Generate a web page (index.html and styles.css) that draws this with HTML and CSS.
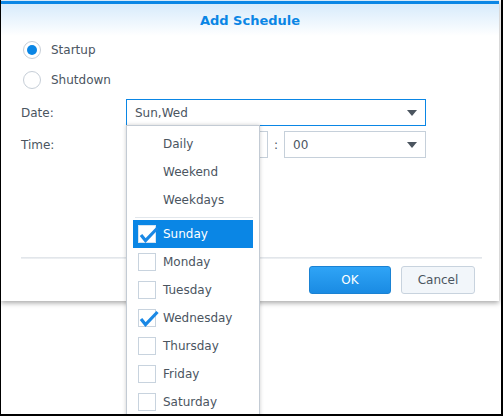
FILE: index.html
```html
<!DOCTYPE html>
<html>
<head>
<meta charset="utf-8">
<link rel="stylesheet" href="styles.css">
</head>
<body>
<div class="frame">
  <div class="dialog">
    <div class="header">Add Schedule</div>
    <div class="content">
      <div class="radio-row"><span class="radio checked"></span><span>Startup</span></div>
      <div class="radio-row"><span class="radio"></span><span>Shutdown</span></div>
      <div class="field-row date-row">
        <span class="label">Date:</span>
        <div class="combo focus wide"><span>Sun,Wed</span><span class="arrow"></span></div>
      </div>
      <div class="field-row">
        <span class="label">Time:</span>
        <div class="combo half"><span></span><span class="arrow"></span></div>
        <span class="colon">:</span>
        <div class="combo half"><span>00</span><span class="arrow"></span></div>
      </div>
    </div>
    <div class="footer">
      <div class="sep"></div>
      <div class="buttons">
        <button class="btn primary">OK</button>
        <button class="btn">Cancel</button>
      </div>
    </div>
  </div>
  <div class="dropdown">
    <div class="item plain">Daily</div>
    <div class="item plain">Weekend</div>
    <div class="item plain">Weekdays</div>
    <div class="divider"></div>
    <div class="item selected"><span class="box"><svg class="check" viewBox="0 0 18 18" width="18" height="18"><polyline points="2,9 6.5,14.5 18.5,2"/></svg></span>Sunday</div>
    <div class="item"><span class="box"></span>Monday</div>
    <div class="item"><span class="box"></span>Tuesday</div>
    <div class="item"><span class="box"><svg class="check" viewBox="0 0 18 18" width="18" height="18"><polyline points="2,9 6.5,14.5 18.5,2"/></svg></span>Wednesday</div>
    <div class="item"><span class="box"></span>Thursday</div>
    <div class="item"><span class="box"></span>Friday</div>
    <div class="item"><span class="box"></span>Saturday</div>
  </div>
</div>
</body>
</html>
```
FILE: styles.css
```css
* { box-sizing: border-box; }
html, body { margin: 0; padding: 0; background: #fff; }
body { font-family: "DejaVu Sans", Verdana, sans-serif; font-size: 12px; color: #4b555f; }

.frame {
  position: relative;
  width: 503px;
  height: 416px;
  border-left: 1px solid #000;
  border-right: 2px solid #000;
  border-bottom: 2px solid #000;
  overflow: hidden;
  background: #fff;
}

.dialog {
  width: 498px;
  height: 301px;
  background: #fff;
  box-shadow: 0 2px 5px rgba(0,0,0,0.35);
  display: flex;
  flex-direction: column;
}

.header {
  height: 36px;
  border-top: 1px solid #d4e7f7;
  box-shadow: inset 0 3px 0 #0a86e5;
  background: linear-gradient(#d3e9fb, #ffffff);
  color: #0a86e5;
  font-weight: bold;
  font-size: 13px;
  text-align: center;
  padding-top: 12px;
}

.content { padding: 0 0 0 20px; }

.radio-row {
  height: 30px;
  display: flex;
  align-items: center;
  padding-left: 2px;
  gap: 10px;
}
.radio-row:first-child { margin-top: -1px; }

.radio {
  width: 18px;
  height: 18px;
  border-radius: 50%;
  border: 1px solid #c6ced7;
  background: #fff;
  display: flex;
  align-items: center;
  justify-content: center;
}
.radio.checked::after {
  content: "";
  width: 10px;
  height: 10px;
  border-radius: 50%;
  background: #0a86e5;
}

.field-row {
  display: flex;
  align-items: center;
  height: 27px;
  margin-top: 5px;
}
.date-row { margin-top: 4px; }

.label { width: 105px; }

.combo {
  height: 27px;
  border: 1px solid #c6d0da;
  display: flex;
  align-items: center;
  justify-content: space-between;
  padding: 0 8px 0 8px;
  background: #fff;
}
.combo.focus { border-color: #0a86e5; }
.combo.wide { width: 300px; }
.combo.half { width: 142px; }

.arrow {
  width: 0;
  height: 0;
  border-left: 5px solid transparent;
  border-right: 5px solid transparent;
  border-top: 6px solid #4b555f;
}

.colon { width: 16px; text-align: center; }

.footer { margin-top: 99px; }
.sep {
  height: 2px;
  margin: 0 17px 0 20px;
  background: linear-gradient(#dde2e7, #f1f3f5);
}
.buttons {
  display: flex;
  justify-content: flex-end;
  gap: 10px;
  padding: 7px 24px 0 0;
}
.btn {
  height: 28px;
  font-family: "DejaVu Sans", Verdana, sans-serif;
  font-size: 12px;
  border-radius: 3px;
  border: 1px solid #c8d3de;
  background: #f2f6fa;
  color: #4b555f;
  width: 74px;
  padding: 0;
}
.btn.primary {
  width: 82px;
  border-color: #1a82d3;
  background: linear-gradient(#2fa4f6, #1a8be3);
  color: #fff;
}

.dropdown {
  position: absolute;
  left: 125px;
  top: 125px;
  width: 134px;
  height: 300px;
  background: #fff;
  border: 1px solid #c3cbd4;
  box-shadow: 0 0 4px rgba(0,0,0,0.2);
  padding: 4px 6px 0 6px;
}

.item {
  height: 28px;
  display: flex;
  align-items: center;
  padding-left: 30px;
  white-space: nowrap;
}
.item .box {
  width: 18px;
  height: 18px;
  border: 1px solid #c8d3de;
  background: #fff;
  margin-left: -25px;
  margin-right: 7px;
  position: relative;
  flex: none;
}
.item.selected { background: #0a86e5; color: #fff; }
.item.selected .box { border-color: #d6e4f1; }

.check {
  position: absolute;
  left: 0;
  top: 0;
  overflow: visible;
}
.check polyline {
  fill: none;
  stroke: #1a88e5;
  stroke-width: 3.2;
  stroke-linecap: butt;
  stroke-linejoin: miter;
}

.divider {
  height: 1px;
  background: #e2e7ec;
  margin: 3px 0 2px 2px;
}
```
